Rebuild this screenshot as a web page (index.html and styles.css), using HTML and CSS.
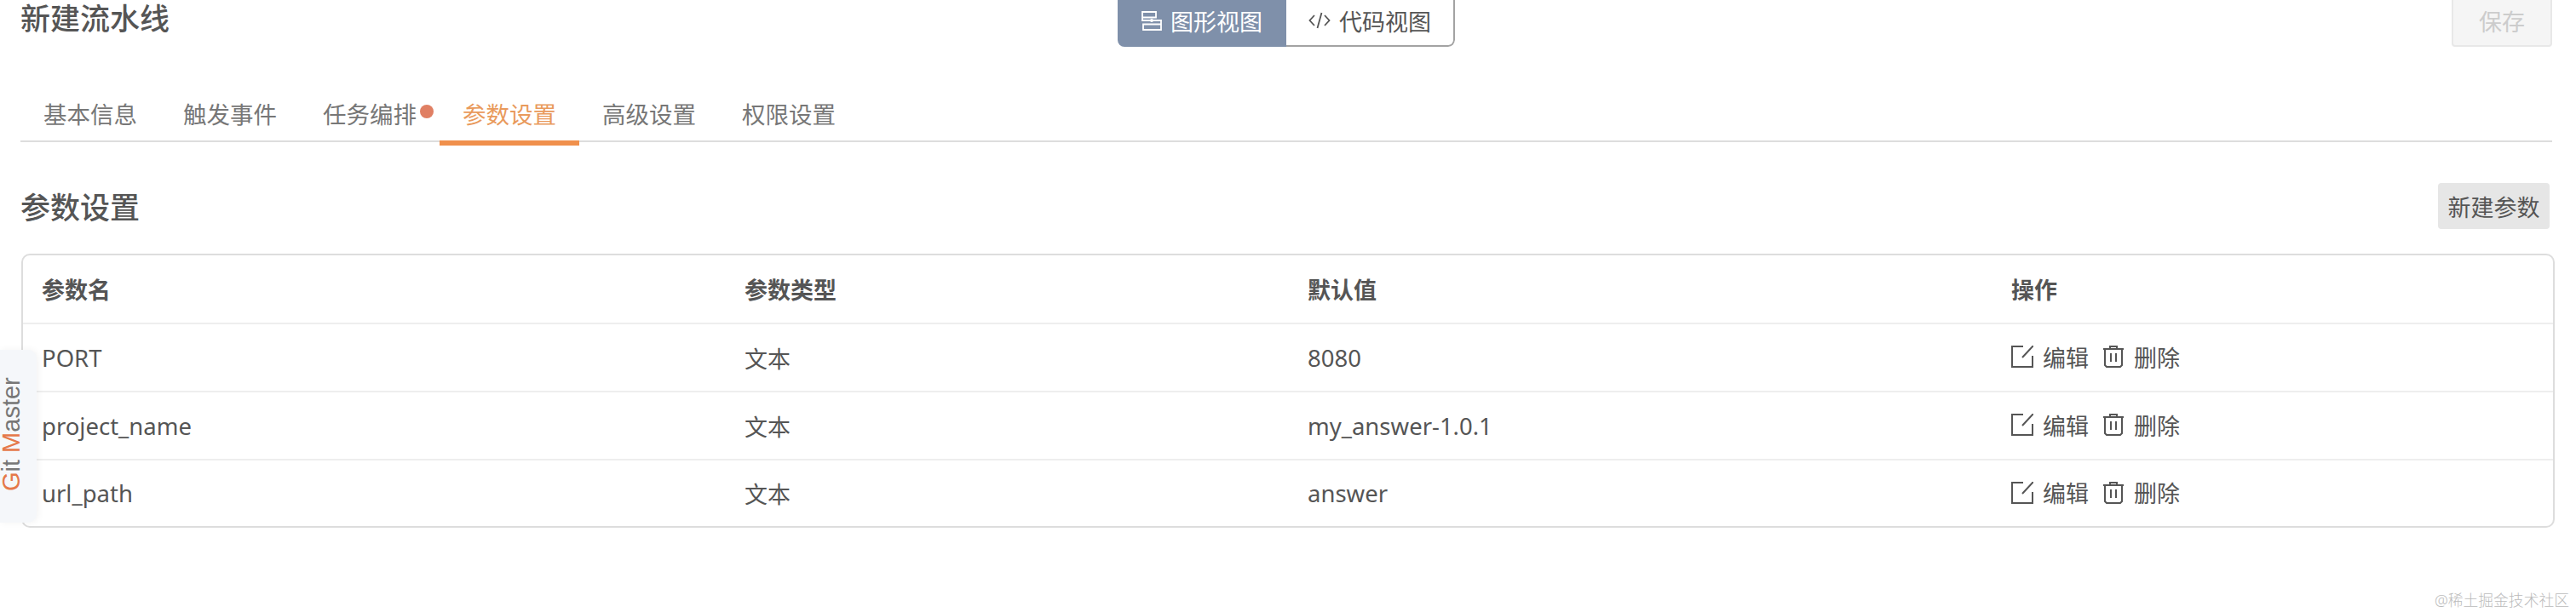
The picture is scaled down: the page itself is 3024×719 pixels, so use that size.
FILE: index.html
```html
<!DOCTYPE html>
<html lang="zh-CN">
<head>
  <meta charset="UTF-8" />
  <title>新建流水线</title>
  <link rel="stylesheet" href="styles.css">
</head>
<body>

  <header class="top-bar">
    <h1>新建流水线</h1>
    <div class="view-switch">
      <a class="view-btn active">
        <svg class="icon-flow" viewBox="0 0 24 24" fill="none" stroke="currentColor" stroke-width="1.800">
          <path d="M1 2h16v6.500H1zM1 8.500V12h22v4.500M2 16.500h21V23H2z"/>
          <circle cx="12" cy="12" r="2" fill="currentColor" stroke="none"/>
        </svg>
        图形视图
      </a>
      <a class="view-btn">
        <svg class="icon-code" viewBox="0 0 26 20" fill="none" stroke="currentColor" stroke-width="1.800">
          <path d="M7 4 1.500 10 7 16M19 4l5.500 6L19 16M15.500 1l-5 18"/>
        </svg>
        代码视图
      </a>
    </div>
    <button class="save-btn">保存</button>
  </header>

  <nav class="tabs">
    <a class="tab">基本信息</a>
    <a class="tab">触发事件</a>
    <a class="tab has-dot">任务编排</a>
    <a class="tab active">参数设置</a>
    <a class="tab">高级设置</a>
    <a class="tab">权限设置</a>
  </nav>

  <main>
    <div class="section-head">
      <h2>参数设置</h2>
      <button class="add-btn">新建参数</button>
    </div>

    <div class="card">
      <table>
        <thead>
          <tr>
            <th class="col-name">参数名</th>
            <th class="col-type">参数类型</th>
            <th class="col-value">默认值</th>
            <th>操作</th>
          </tr>
        </thead>
        <tbody>
          <tr>
            <td class="latin">PORT</td>
            <td>文本</td>
            <td class="latin">8080</td>
            <td>
              <span class="actions">
                <svg class="icon" viewBox="0 0 26 26" fill="none" stroke="currentColor" stroke-width="2"><path d="M14 1H1v24h24V12M26 0 13 14"/></svg>编辑
                <svg class="icon icon-trash" viewBox="0 0 26 26" fill="none" stroke="currentColor" stroke-width="2"><path d="M1 4h24M9 4V1h8v3M3 4v19l2 2h16l2-2V4M10 9v10M16 9v10"/></svg>删除
              </span>
            </td>
          </tr>
          <tr>
            <td class="latin">project_name</td>
            <td>文本</td>
            <td class="latin">my_answer-1.0.1</td>
            <td>
              <span class="actions">
                <svg class="icon" viewBox="0 0 26 26" fill="none" stroke="currentColor" stroke-width="2"><path d="M14 1H1v24h24V12M26 0 13 14"/></svg>编辑
                <svg class="icon icon-trash" viewBox="0 0 26 26" fill="none" stroke="currentColor" stroke-width="2"><path d="M1 4h24M9 4V1h8v3M3 4v19l2 2h16l2-2V4M10 9v10M16 9v10"/></svg>删除
              </span>
            </td>
          </tr>
          <tr>
            <td class="latin">url_path</td>
            <td>文本</td>
            <td class="latin">answer</td>
            <td>
              <span class="actions">
                <svg class="icon" viewBox="0 0 26 26" fill="none" stroke="currentColor" stroke-width="2"><path d="M14 1H1v24h24V12M26 0 13 14"/></svg>编辑
                <svg class="icon icon-trash" viewBox="0 0 26 26" fill="none" stroke="currentColor" stroke-width="2"><path d="M1 4h24M9 4V1h8v3M3 4v19l2 2h16l2-2V4M10 9v10M16 9v10"/></svg>删除
              </span>
            </td>
          </tr>
        </tbody>
      </table>
    </div>
  </main>

  <aside class="git-master"><span class="hl">G</span>it <span class="hl">M</span>aster</aside>
  <div class="watermark">@稀土掘金技术社区</div>

</body>
</html>
```

FILE: styles.css
```css
/* Base */
html, body {
  height: 100%;
}

body {
  margin: 0;
  padding: 0 28px 0 24px;
  overflow: hidden;
  background: #fff;
  color: #555;
  font-family: "Noto Sans", "Noto Sans CJK SC", sans-serif;
  font-size: 27px;
}

/* Top bar: the buttons run off the top of the window */
.top-bar {
  display: grid;
  grid-template-columns: 1fr auto 1fr;
  grid-template-rows: 55px;
  align-items: end;
  height: 55px;
}

h1 {
  margin: 0 0 11px;
  font-size: 35px;
  line-height: 44px;
  font-weight: 500;
  color: #555;
}

.view-switch {
  display: flex;
  height: 62px;
  border-radius: 0 0 8px 8px;
  overflow: hidden;
}

.view-btn {
  display: flex;
  align-items: center;
  justify-content: center;
  gap: 10px;
  box-sizing: border-box;
  width: 198px;
  color: #555;
  background: #fff;
  border: 2px solid #a3a3a3;
  border-left: none;
  border-radius: 0 0 8px 0;
}

.view-btn.active {
  color: #fff;
  background: #7f90aa;
  border: none;
  border-radius: 0;
}

.icon-flow {
  width: 24px;
  height: 24px;
}

.icon-code {
  width: 26px;
  height: 20px;
}

.save-btn {
  justify-self: end;
  width: 118px;
  height: 62px;
  padding: 0;
  font: inherit;
  color: #ccc;
  background: #f5f5f5;
  border: 2px solid #e8e8e8;
  border-radius: 4px;
}

/* Tabs */
.tabs {
  display: flex;
  height: 64px;
  margin-top: 46px;
  border-bottom: 2px solid #ddd;
}

.tab {
  position: relative;
  box-sizing: border-box;
  height: 70px;
  padding: 0 27px;
  font-size: 27.500px;
  line-height: 67px;
  color: #777;
  border-bottom: 6px solid transparent;
}

.tab.active {
  color: #e99a5c;
  border-bottom-color: #f0904c;
}

.tab.has-dot::after {
  content: "";
  position: absolute;
  top: 22px;
  right: 7px;
  width: 16px;
  height: 16px;
  border-radius: 50%;
  background: #e07f63;
}

/* Section */
.section-head {
  display: flex;
  justify-content: space-between;
  align-items: center;
  height: 54px;
  margin: 48px 3px 29px 0;
}

h2 {
  margin: -2px 0 0;
  font-size: 35px;
  font-weight: 500;
  color: #555;
}

.add-btn {
  width: 131px;
  height: 54px;
  padding: 0;
  font: inherit;
  color: #555;
  background: #e6e6e6;
  border: none;
  border-radius: 4px;
}

/* Table */
.card {
  margin: 0 -3px 0 1px;
  border: 2px solid #ddd;
  border-radius: 10px;
  overflow: hidden;
}

table {
  width: 100%;
  border-collapse: collapse;
  table-layout: fixed;
}

th, td {
  box-sizing: border-box;
  height: 80px;
  padding: 0 0 0 22px;
  text-align: left;
  color: #555;
  border-bottom: 2px solid #eee;
}

th {
  font-weight: 700;
}

td.latin {
  font-size: 27.500px;
}

tbody tr:last-child td {
  height: 78px;
  border-bottom: none;
}

.col-name {
  width: 825px;
}

.col-type {
  width: 661px;
}

.col-value {
  width: 826px;
}

.actions {
  display: inline-flex;
  align-items: center;
  gap: 11px;
}

.icon {
  width: 26px;
  height: 26px;
}

.icon-trash {
  margin-left: 5px;
}

/* Floating bits */
.git-master {
  position: absolute;
  left: 0;
  top: 411px;
  box-sizing: border-box;
  width: 43px;
  height: 203px;
  padding-top: 37px;
  writing-mode: vertical-rl;
  transform: rotate(180deg);
  font-family: "Liberation Sans", sans-serif;
  font-size: 29px;
  line-height: 26px;
  color: #777;
  background: #f5f7fa;
  border-top-left-radius: 10px;
  border-bottom-left-radius: 10px;
  box-shadow: -2px 0 8px rgba(0, 0, 0, 0.05);
}

.git-master .hl {
  color: #e5794a;
}

.watermark {
  position: absolute;
  right: 8px;
  top: 691px;
  font-size: 17.800px;
  font-weight: 300;
  color: #bbb;
}
```
